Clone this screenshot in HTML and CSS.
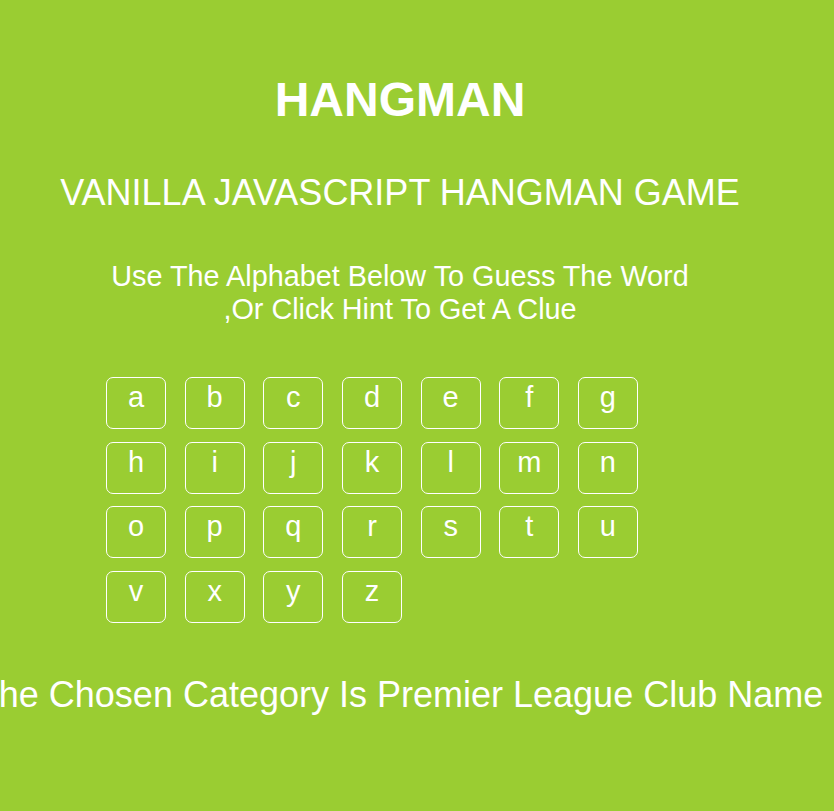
FILE: index.html
```html
<!DOCTYPE html>
<html>
<head>
<meta charset="utf-8">
<link rel="stylesheet" href="styles.css">
</head>
<body>
<main class="page">
  <h1 class="title">HANGMAN</h1>
  <h2 class="subtitle">VANILLA JAVASCRIPT HANGMAN GAME</h2>
  <p class="intro">Use The Alphabet Below To Guess The Word<br>,Or Click Hint To Get A Clue</p>
  <div class="keys-wrap">
    <ul class="keys">
      <li class="key">a</li><li class="key">b</li><li class="key">c</li><li class="key">d</li><li class="key">e</li><li class="key">f</li><li class="key">g</li>
      <li class="key">h</li><li class="key">i</li><li class="key">j</li><li class="key">k</li><li class="key">l</li><li class="key">m</li><li class="key">n</li>
      <li class="key">o</li><li class="key">p</li><li class="key">q</li><li class="key">r</li><li class="key">s</li><li class="key">t</li><li class="key">u</li>
      <li class="key">v</li><li class="key">x</li><li class="key">y</li><li class="key">z</li>
    </ul>
  </div>
  <p class="category">The Chosen Category Is Premier League Club Name</p>
</main>
</body>
</html>
```
FILE: styles.css
```css
html, body {
  margin: 0;
  padding: 0;
  background: #9acd32;
  overflow: hidden;
}
body {
  font-family: "Liberation Sans", Arial, sans-serif;
  color: #ffffff;
  height: 811px;
}
.page {
  width: 800px;
  display: flex;
  flex-direction: column;
  align-items: center;
}
.title {
  margin: 70px 0 0;
  font-size: 48px;
  font-weight: bold;
  line-height: 60px;
}
.subtitle {
  margin: 43px 0 0;
  font-size: 36px;
  font-weight: normal;
  line-height: 40px;
}
.intro {
  margin: 47px 0 0;
  font-size: 28.8px;
  line-height: 33px;
  text-align: center;
}
.keys-wrap {
  align-self: stretch;
  padding-left: 106px;
  margin-top: 51px;
}
.keys {
  list-style: none;
  margin: 0;
  padding: 0;
  display: grid;
  grid-template-columns: repeat(7, 60px);
  column-gap: 18.67px;
  row-gap: 12.67px;
}
.key {
  box-sizing: border-box;
  height: 52px;
  border: 1px solid #ffffff;
  border-radius: 7px;
  font-size: 29px;
  line-height: 38px;
  text-align: center;
}
.category {
  margin: 52px 0 0;
  font-size: 36px;
  line-height: 40px;
  white-space: nowrap;
}
```
